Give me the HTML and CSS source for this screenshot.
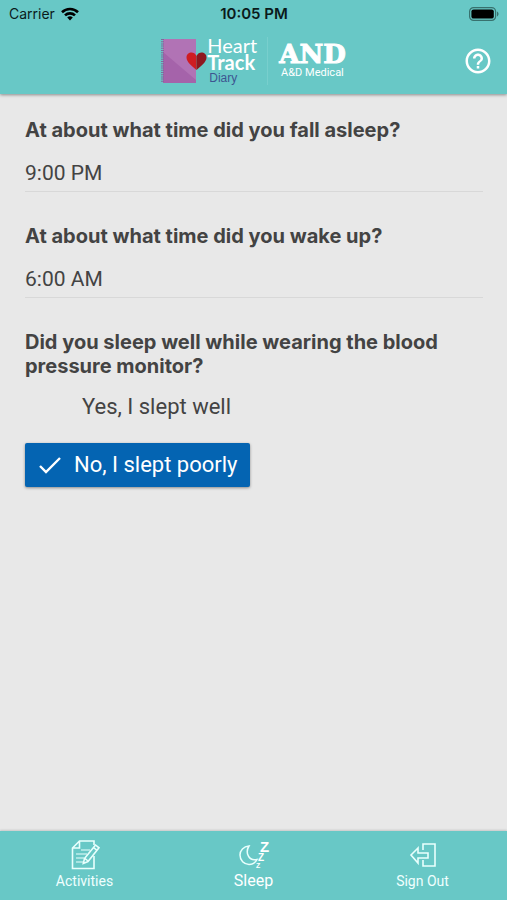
FILE: index.html
```html
<!DOCTYPE html>
<html lang="en">
<head>
  <meta charset="utf-8">
  <meta name="viewport" content="width=device-width, initial-scale=1">
  <title>Heart Track Diary</title>
  <link rel="stylesheet" href="styles.css">
</head>
<body>
  <header class="top">
    <div class="status">
      <div class="carrier">
        <span>Carrier</span>
        <svg width="18" height="14" viewBox="0 0 18 14" fill="none" stroke="#000" stroke-width="2.6" aria-hidden="true">
          <path d="M1 5.2a11.5 11.5 0 0 1 16 0M4 8.4a7.2 7.2 0 0 1 10 0"/>
          <path d="M9 13.5 6.2 10.6a4 4 0 0 1 5.6 0z" fill="#000" stroke="none"/>
        </svg>
      </div>
      <span class="clock">10:05 PM</span>
      <svg class="battery" width="30" height="14" viewBox="0 0 30 14" aria-hidden="true">
        <rect x=".6" y=".6" width="26" height="12.8" rx="4" fill="none" stroke="#38716e" stroke-width="1.2"/>
        <rect x="2.4" y="2.4" width="22.4" height="9.2" rx="2.2"/>
        <path d="M28 4.6c2 .8 2 4 0 4.8z" fill="#38716e"/>
      </svg>
    </div>
    <div class="bar">
      <div class="brand">
        <svg width="46" height="46" viewBox="0 0 46 46" aria-hidden="true">
          <path d="M2 1h33v44H2z" fill="#b173b5"/>
          <path d="M2 14 35 42v3H2z" fill="#a563aa"/>
          <path d="M1.500 1v44" stroke="#7d6b9c" stroke-width="3" stroke-dasharray="1 1.200"/>
          <path d="M35.500 32C31 28 25.500 24 25.500 19.500c0-5.500 7.500-7 10-1.500z" fill="#cf1c22"/>
          <path d="M35.500 32C40 28 45.500 24 45.500 19.500c0-5.500-7.500-7-10-1.500z" fill="#8e1820"/>
        </svg>
        <div class="product">
          <span class="heart">Heart</span>
          <span class="track">Track</span>
          <span class="diary">Diary</span>
        </div>
        <div class="maker">
          <span class="and">AND</span>
          <span class="medical">A&amp;D Medical</span>
        </div>
      </div>
      <button class="help" type="button" aria-label="Help">
        <svg width="30" height="30" viewBox="0 0 24 24" fill="#fff" aria-hidden="true">
          <path d="M11 18h2v-2h-2v2zm1-16C6.480 2 2 6.480 2 12s4.480 10 10 10 10-4.480 10-10S17.520 2 12 2zm0 18c-4.410 0-8-3.590-8-8s3.590-8 8-8 8 3.590 8 8-3.590 8-8 8zm0-14c-2.210 0-4 1.790-4 4h2c0-1.100.9-2 2-2s2 .9 2 2c0 2-3 1.750-3 5h2c0-2.250 3-2.500 3-5 0-2.210-1.790-4-4-4z"/>
        </svg>
      </button>
    </div>
  </header>

  <main>
    <form>
      <div class="field">
        <label class="question" for="asleep">At about what time did you fall asleep?</label>
        <input class="time" id="asleep" type="text" value="9:00 PM">
      </div>
      <div class="field">
        <label class="question" for="awake">At about what time did you wake up?</label>
        <input class="time" id="awake" type="text" value="6:00 AM">
      </div>
      <fieldset>
        <legend class="question">Did you sleep well while wearing the blood pressure monitor?</legend>
        <div class="options">
          <label class="option">
            <input type="radio" name="quality" value="well">
            <span>Yes, I slept well</span>
          </label>
          <label class="option">
            <input type="radio" name="quality" value="poorly" checked>
            <svg class="check" width="24" height="20" viewBox="0 0 24 20" fill="none" stroke="#fff" stroke-width="2.400" aria-hidden="true"><path d="m2 11 6 6L22 3"/></svg>
            <span>No, I slept poorly</span>
          </label>
        </div>
      </fieldset>
    </form>
  </main>

  <nav>
    <a href="#activities">
      <svg width="30" height="30" viewBox="0 0 30 30" fill="none" stroke="#e9fffd" stroke-width="1.600" aria-hidden="true">
        <path d="M24 16v12.500H2.500V8L9.500 1H24v4M9.500 1v7h-7"/>
        <path d="M11 10h9M6 14h11M6 18h8M6 22h7" stroke-width="1.100"/>
        <path d="m14.500 18.500 11-13.500 3.500 2.800L18 21.500l-4.700 2zM15 18.500l3 2.500M23.500 7.500l3.500 2.800"/>
      </svg>
      <span>Activities</span>
    </a>
    <a class="current" href="#sleep" aria-current="page">
      <svg width="32" height="30" viewBox="0 0 32 30" aria-hidden="true">
        <path d="M11 6C5.500 6.500 2 10.500 2 15c0 5.500 4 9.500 9 9.500 3.500 0 6.500-2 8-5C10.500 21.500 7 12.500 11 6z" fill="none" stroke="#e9fffd" stroke-width="1.500"/>
        <g class="snore" fill="#fff">
          <text x="22" y="12" font-size="15">Z</text>
          <text x="20" y="21" font-size="10">Z</text>
          <text x="18" y="28" font-size="7">Z</text>
        </g>
      </svg>
      <span>Sleep</span>
    </a>
    <a href="#sign-out">
      <svg width="30" height="30" viewBox="0 0 30 30" fill="none" stroke="#e9fffd" stroke-width="1.600" aria-hidden="true">
        <path d="M15 10V4h12v22H15v-6"/>
        <path d="M10 8 3 15l7 8v-5h10v-5H10z"/>
      </svg>
      <span>Sign Out</span>
    </a>
  </nav>
</body>
</html>
```
FILE: styles.css
```css
* {
  box-sizing: border-box;
}

body {
  margin: 0;
  min-height: 100vh;
  display: flex;
  flex-direction: column;
  background: #e8e8e8;
  color: #434343;
  font-family: Roboto, sans-serif;
}

.top {
  background: #68c8c6;
  box-shadow: 0 1px 3px rgba(0, 0, 0, 0.4);
}

.status {
  display: grid;
  grid-template-columns: 1fr auto 1fr;
  align-items: center;
  height: 28px;
  padding: 0 8px 0 9px;
  color: #0b1b1b;
  font: 14px/20px Inter, sans-serif;
}

.carrier {
  display: flex;
  align-items: center;
  gap: 6px;
}

.clock {
  font-size: 15px;
  font-weight: 600;
}

.battery {
  justify-self: end;
}

.bar {
  display: grid;
  grid-template-columns: 1fr auto 1fr;
  align-items: center;
  height: 66px;
  padding: 0 14px;
}

.brand {
  grid-column: 2;
  display: flex;
  align-items: center;
  color: #fff;
}

.product {
  display: flex;
  flex-direction: column;
  padding-right: 10px;
  border-right: 1px solid #78cfcd;
  font: 20px/17px Lato, sans-serif;
}

.track {
  font-weight: 700;
}

.diary {
  padding-left: 2px;
  color: #3d5591;
  font: 12px/14px "Liberation Sans", sans-serif;
}

.maker {
  display: flex;
  flex-direction: column;
  align-items: center;
  padding-left: 11px;
}

.and {
  font: 700 26px/24px "DejaVu Serif", serif;
  -webkit-text-stroke: 1px #fff;
}

.medical {
  font-size: 11px;
  line-height: 14px;
}

.help {
  justify-self: end;
  display: flex;
  padding: 0;
  border: 0;
  background: none;
}

main {
  flex: 1;
  padding: 24px 24px 24px 25px;
}

.field {
  display: flex;
  flex-direction: column;
  gap: 12px;
  margin-bottom: 32px;
}

.question {
  padding: 0;
  font: 700 20px/24px Inter, sans-serif;
}

.time {
  width: 100%;
  height: 38px;
  padding: 0;
  border: 0;
  border-bottom: 1px solid #d8d8d8;
  border-radius: 0;
  background: none;
  color: inherit;
  font: 21px/28px Roboto, sans-serif;
}

fieldset {
  margin: 0;
  padding: 0;
  border: 0;
}

.options {
  display: flex;
  flex-direction: column;
  align-items: flex-start;
  gap: 14px;
  padding-top: 7px;
}

.option {
  position: relative;
  display: flex;
  align-items: center;
  gap: 12px;
  height: 44px;
  padding: 0 12px 0 57px;
  border-radius: 2px;
  font-size: 22px;
  line-height: 28px;
}

.option input {
  position: absolute;
  opacity: 0;
  margin: 0;
}

.option:has(:checked) {
  padding-left: 13px;
  background: #0464b2;
  color: #fff;
  box-shadow: 0 1px 3px rgba(0, 0, 0, 0.4);
}

nav {
  display: grid;
  grid-template-columns: repeat(3, 1fr);
  height: 69px;
  background: #68c8c6;
  box-shadow: 0 -1px 2px rgba(0, 0, 0, 0.15);
}

nav a {
  display: flex;
  flex-direction: column;
  align-items: center;
  padding-top: 9px;
  color: #f0fffe;
  font-size: 14px;
  line-height: 22px;
  text-decoration: none;
}

nav .current {
  color: #fff;
  font-size: 16px;
}

.snore {
  font-family: "Liberation Sans", sans-serif;
  font-weight: 700;
}
```
